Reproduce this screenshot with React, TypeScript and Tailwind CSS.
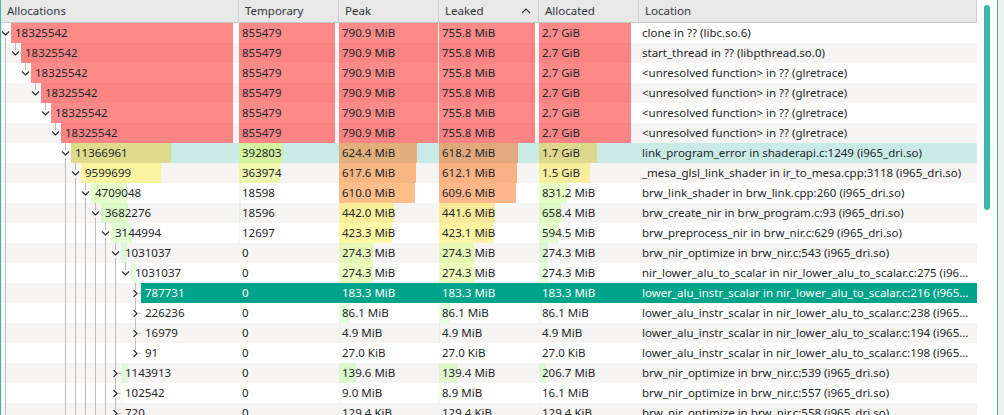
type Row = {
  d: number;
  n: number;
  tmp: number;
  peak: string;
  leaked: string;
  alloc: string;
  loc: string;
  open: boolean;
  next: boolean;
  first?: boolean;
  state?: 'hover' | 'selected';
};

const UNRESOLVED = '<unresolved function> in ?? (glretrace)';

const ROWS: Row[] = [
  { d: 0, n: 18325542, tmp: 855479, peak: '790.9 MiB', leaked: '755.8 MiB', alloc: '2.7 GiB', loc: 'clone in ?? (libc.so.6)', open: true, next: true, first: true },
  { d: 1, n: 18325542, tmp: 855479, peak: '790.9 MiB', leaked: '755.8 MiB', alloc: '2.7 GiB', loc: 'start_thread in ?? (libpthread.so.0)', open: true, next: false },
  { d: 2, n: 18325542, tmp: 855479, peak: '790.9 MiB', leaked: '755.8 MiB', alloc: '2.7 GiB', loc: UNRESOLVED, open: true, next: false },
  { d: 3, n: 18325542, tmp: 855479, peak: '790.9 MiB', leaked: '755.8 MiB', alloc: '2.7 GiB', loc: UNRESOLVED, open: true, next: false },
  { d: 4, n: 18325542, tmp: 855479, peak: '790.9 MiB', leaked: '755.8 MiB', alloc: '2.7 GiB', loc: UNRESOLVED, open: true, next: false },
  { d: 5, n: 18325542, tmp: 855479, peak: '790.9 MiB', leaked: '755.8 MiB', alloc: '2.7 GiB', loc: UNRESOLVED, open: true, next: false },
  { d: 6, n: 11366961, tmp: 392803, peak: '624.4 MiB', leaked: '618.2 MiB', alloc: '1.7 GiB', loc: 'link_program_error in shaderapi.c:1249 (i965_dri.so)', open: true, next: true, state: 'hover' },
  { d: 7, n: 9599699, tmp: 363974, peak: '617.6 MiB', leaked: '612.1 MiB', alloc: '1.5 GiB', loc: '_mesa_glsl_link_shader in ir_to_mesa.cpp:3118 (i965_dri.so)', open: true, next: true },
  { d: 8, n: 4709048, tmp: 18598, peak: '610.0 MiB', leaked: '609.6 MiB', alloc: '831.2 MiB', loc: 'brw_link_shader in brw_link.cpp:260 (i965_dri.so)', open: true, next: true },
  { d: 9, n: 3682276, tmp: 18596, peak: '442.0 MiB', leaked: '441.6 MiB', alloc: '658.4 MiB', loc: 'brw_create_nir in brw_program.c:93 (i965_dri.so)', open: true, next: true },
  { d: 10, n: 3144994, tmp: 12697, peak: '423.3 MiB', leaked: '423.1 MiB', alloc: '594.5 MiB', loc: 'brw_preprocess_nir in brw_nir.c:629 (i965_dri.so)', open: true, next: true },
  { d: 11, n: 1031037, tmp: 0, peak: '274.3 MiB', leaked: '274.3 MiB', alloc: '274.3 MiB', loc: 'brw_nir_optimize in brw_nir.c:543 (i965_dri.so)', open: true, next: true },
  { d: 12, n: 1031037, tmp: 0, peak: '274.3 MiB', leaked: '274.3 MiB', alloc: '274.3 MiB', loc: 'nir_lower_alu_to_scalar in nir_lower_alu_to_scalar.c:275 (i96…', open: true, next: false },
  { d: 13, n: 787731, tmp: 0, peak: '183.3 MiB', leaked: '183.3 MiB', alloc: '183.3 MiB', loc: 'lower_alu_instr_scalar in nir_lower_alu_to_scalar.c:216 (i965…', open: false, next: true, state: 'selected' },
  { d: 13, n: 226236, tmp: 0, peak: '86.1 MiB', leaked: '86.1 MiB', alloc: '86.1 MiB', loc: 'lower_alu_instr_scalar in nir_lower_alu_to_scalar.c:238 (i965…', open: false, next: true },
  { d: 13, n: 16979, tmp: 0, peak: '4.9 MiB', leaked: '4.9 MiB', alloc: '4.9 MiB', loc: 'lower_alu_instr_scalar in nir_lower_alu_to_scalar.c:194 (i965…', open: false, next: true },
  { d: 13, n: 91, tmp: 0, peak: '27.0 KiB', leaked: '27.0 KiB', alloc: '27.0 KiB', loc: 'lower_alu_instr_scalar in nir_lower_alu_to_scalar.c:198 (i965…', open: false, next: false },
  { d: 11, n: 1143913, tmp: 0, peak: '139.6 MiB', leaked: '139.4 MiB', alloc: '206.7 MiB', loc: 'brw_nir_optimize in brw_nir.c:539 (i965_dri.so)', open: false, next: true },
  { d: 11, n: 102542, tmp: 0, peak: '9.0 MiB', leaked: '8.9 MiB', alloc: '16.1 MiB', loc: 'brw_nir_optimize in brw_nir.c:557 (i965_dri.so)', open: false, next: true },
  { d: 11, n: 720, tmp: 0, peak: '129.4 KiB', leaked: '129.4 KiB', alloc: '129.4 KiB', loc: 'brw_nir_optimize in brw_nir.c:558 (i965_dri.so)', open: false, next: true },
];

const toMiB = (s: string) => {
  const [num, unit] = s.split(' ');
  const v = parseFloat(num);
  if (unit === 'GiB') return v * 1024;
  if (unit === 'KiB') return v / 1024;
  return v;
};

// cost bar: hue goes red -> green as the share drops, and gets paler
const bar = (frac: number, avail: number) => {
  const w = Math.round(frac * avail);
  if (w < 1) return {};
  const hue = 120 * (1 - frac);
  const a = Math.min(0.46, 0.08 + 0.5 * frac);
  const c = `hsla(${hue.toFixed(0)},100%,50%,${a.toFixed(2)})`;
  return { backgroundImage: `linear-gradient(to right, ${c} ${w}px, transparent ${w}px)` };
};

const ancestors = (d: number) => (d === 0 ? [] : [0, ...[6, 7, 8, 9, 10, 11].filter((k) => k < d)]);

function Branch({ r }: { r: Row }) {
  const x = 10 * r.d + 4.5;
  const o = 10 * r.d;
  return (
    <svg width={10 * r.d + 10} height={20} className="shrink-0" fill="none" stroke="#bdbdbd" strokeWidth={1}>
      {ancestors(r.d).map((k) => (
        <line key={k} x1={10 * k + 4.5} y1={0} x2={10 * k + 4.5} y2={20} />
      ))}
      {!r.first && <line x1={x} y1={0} x2={x} y2={7} />}
      {r.next && <line x1={x} y1={15} x2={x} y2={20} />}
      {r.open ? (
        <polyline points={`${o + 1},8.5 ${o + 4.5},12 ${o + 8},8.5`} stroke="#232629" strokeWidth={1.1} />
      ) : (
        <>
          <line x1={o + 7.5} y1={10.5} x2={o + 10} y2={10.5} />
          <polyline points={`${o + 2.5},7 ${o + 6},10.5 ${o + 2.5},14`} stroke="#232629" strokeWidth={1.1} />
        </>
      )}
    </svg>
  );
}

function TreeRow({ r, alt }: { r: Row; alt: boolean }) {
  const sel = r.state === 'selected';
  const state = sel ? 'bg-[#00a48a] text-white' : r.state === 'hover' ? 'bg-[#c9ebe5]' : '';
  const b = (frac: number, avail: number) => (sel ? {} : bar(frac, avail));
  return (
    <div className={`h-[20px] shrink-0 flex leading-[20px] whitespace-nowrap ${alt ? 'bg-[#f6f5f4]' : 'bg-white'}`}>
      <div className="w-[238px] shrink-0 flex">
        <Branch r={r} />
        <div className={`flex-1 pl-[4px] ${state}`} style={b(r.n / 18325542, 222 - 10 * r.d)}>
          {r.n}
        </div>
      </div>
      <div className={`w-[100px] shrink-0 pl-[3px] ${state}`} style={b(r.tmp / 855479, 96)}>
        {r.tmp}
      </div>
      <div className={`w-[100px] shrink-0 pl-[3px] ${state}`} style={b(toMiB(r.peak) / 790.9, 99)}>
        {r.peak}
      </div>
      <div className={`w-[100px] shrink-0 pl-[3px] ${state}`} style={b(toMiB(r.leaked) / 755.8, 96)}>
        {r.leaked}
      </div>
      <div className={`w-[100px] shrink-0 pl-[3px] ${state}`} style={b(toMiB(r.alloc) / 2764.8, 92)}>
        {r.alloc}
      </div>
      <div className={`flex-1 pl-[3px] overflow-hidden ${state}`}>{r.loc}</div>
    </div>
  );
}

function Header() {
  const cell = 'shrink-0 border-r border-[#cfcfcf] pl-[6px] leading-[22px] text-[#31363b]';
  return (
    <div className="h-[23px] shrink-0 flex bg-[#e8e8e8] border-b border-[#c9c9c9]">
      <div className={`w-[238px] ${cell}`}>Allocations</div>
      <div className={`w-[100px] ${cell}`}>Temporary</div>
      <div className={`w-[100px] ${cell}`}>Peak</div>
      <div className={`w-[100px] ${cell} flex items-center justify-between pr-[7px]`}>
        <span>Leaked</span>
        <svg width={10} height={6} fill="none" stroke="#31363b" strokeWidth={1.1}>
          <polyline points="1,5 5,1 9,5" />
        </svg>
      </div>
      <div className={`w-[100px] ${cell}`}>Allocated</div>
      <div className={`flex-1 ${cell} pl-[4px]`}>Location</div>
    </div>
  );
}

export default function App() {
  return (
    <div className="w-[1004px] h-[415px] overflow-hidden bg-[#efefef] font-['Noto_Sans',sans-serif] text-[11.5px] text-[#232629]">
      <div className="w-[998px] h-full flex bg-white border-x border-[#3bb8a5]">
        <div className="w-[976px] shrink-0 flex flex-col overflow-hidden">
          <Header />
          {ROWS.map((r, i) => (
            <TreeRow key={i} r={r} alt={i % 2 === 1} />
          ))}
        </div>
        <div className="flex-1 pt-[5px] pl-[7px]">
          <div className="w-[6px] h-[205px] rounded-full bg-[#3bb8a5]" />
        </div>
      </div>
    </div>
  );
}
